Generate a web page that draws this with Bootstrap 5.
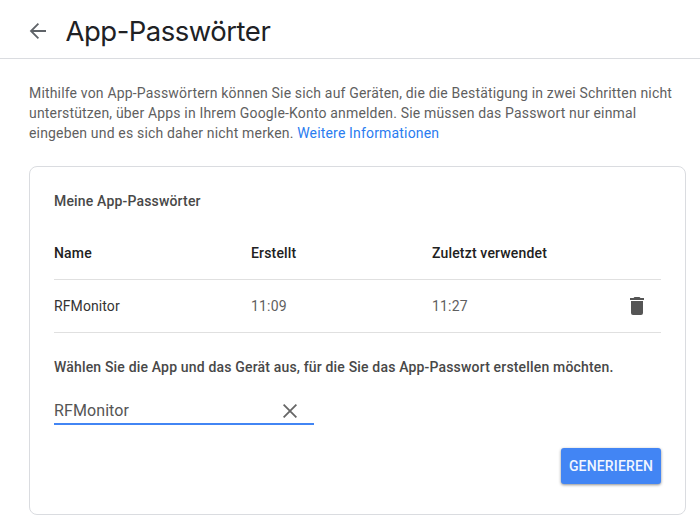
<!DOCTYPE html>
<html lang="de">
<head>
<meta charset="utf-8">
<meta name="viewport" content="width=device-width, initial-scale=1">
<title>App-Passwörter</title>
<link href="https://cdn.jsdelivr.net/npm/bootstrap@5.3.0/dist/css/bootstrap.min.css" rel="stylesheet">
<style>
body { font-family: Roboto, "Liberation Sans", sans-serif; font-size: 14px; line-height: 20px; color: #5f5f5f; background: #fff; overflow: hidden; }
.page-head { height: 59px; padding: 4px 0 0 28px; border-bottom: 1px solid #dadce0; }
.page-title { font-family: Inter, Roboto, sans-serif; font-size: 27.5px; line-height: 36px; color: #202124; margin-left: 17.5px; letter-spacing: -.5px; }
.intro { padding: 24px 0 0 29px; letter-spacing: .17px; white-space: nowrap; }
.intro a { color: #2a7cf0; }
.panel { width: 657px; height: 349px; margin: 23px 0 0 29px; border: 1px solid #dadce0; border-radius: 8px; padding: 24px 24px 0; }
.heading { font-size: 14px; line-height: 20px; font-weight: 500; color: #484848; letter-spacing: .17px; white-space: nowrap; }
.pw-row { height: 53px; border-bottom: 1px solid #e0e0e0; display: grid; grid-template-columns: 197px 181px 1fr 31px; align-items: center; letter-spacing: .17px; }
.pw-head { height: 54px; margin-top: 15px; font-weight: 500; color: #212121; }
.pw-name { color: #333; letter-spacing: .1px; }
.field { width: 260px; height: 28px; margin-top: 20px; padding: 2px 17px 0 0; border-bottom: 2px solid #4285f4; font-size: 16px; letter-spacing: .1px; color: #555; }
.generate { width: 100px; height: 36px; margin-top: 23px; background: #4285f4; color: #f1f6ff; font-size: 14px; font-weight: 500; letter-spacing: .15px; border-radius: 3px; box-shadow: 0 1px 3px rgba(0,0,0,.45); }
</style>
<script src="https://cdn.jsdelivr.net/npm/bootstrap@5.3.0/dist/js/bootstrap.bundle.min.js"></script>
</head>
<body>
<header class="page-head d-flex align-items-center">
  <svg width="20" height="20" viewBox="0 0 20 20" fill="none" stroke="#5f6368" stroke-width="1.8"><path d="M18 10H3.2M10.4 2.6 3 10l7.4 7.4"/></svg>
  <h1 class="page-title fw-normal mb-0">App-Passwörter</h1>
</header>
<main>
  <p class="intro mb-0">Mithilfe von App-Passwörtern können Sie sich auf Geräten, die die Bestätigung in zwei Schritten nicht<br>unterstützen, über Apps in Ihrem Google-Konto anmelden. Sie müssen das Passwort nur einmal<br>eingeben und es sich daher nicht merken. <a href="#" class="text-decoration-none">Weitere Informationen</a></p>
  <section class="panel">
    <h2 class="heading mb-0">Meine App-Passwörter</h2>
    <div class="pw-row pw-head"><span>Name</span><span>Erstellt</span><span>Zuletzt verwendet</span></div>
    <div class="pw-row">
      <span class="pw-name">RFMonitor</span><span>11:09</span><span>11:27</span>
      <svg width="14" height="18" viewBox="0 0 14 18" fill="#555"><path d="M1 4h12v12a2 2 0 0 1-2 2H3a2 2 0 0 1-2-2zM0 1h3.5l1-1h5l1 1H14v2H0z"/></svg>
    </div>
    <h2 class="heading mb-0 mt-4">Wählen Sie die App und das Gerät aus, für die Sie das App-Passwort erstellen möchten.</h2>
    <div class="field d-flex align-items-center justify-content-between">
      <span>RFMonitor</span>
      <svg width="14" height="14" viewBox="0 0 14 14" stroke="#666" stroke-width="1.8"><path d="m.6.6 12.8 12.8M13.4.6.6 13.4"/></svg>
    </div>
    <div class="d-flex justify-content-end"><button type="button" class="generate btn p-0">GENERIEREN</button></div>
  </section>
</main>
</body>
</html>
